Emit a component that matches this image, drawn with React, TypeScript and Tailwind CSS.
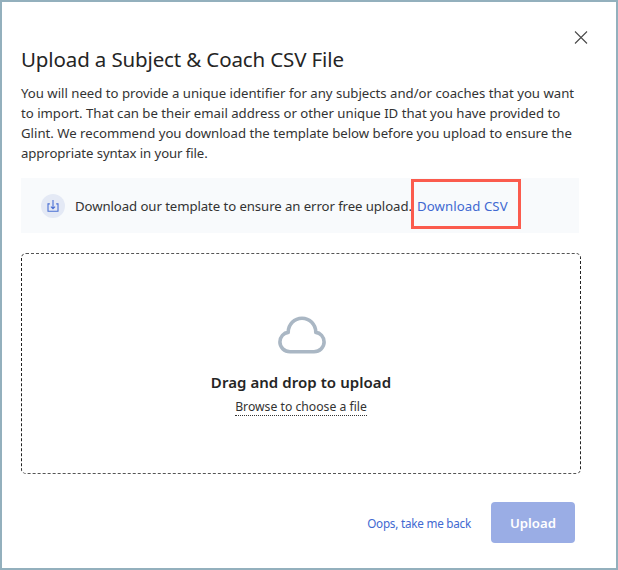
function CloseIcon() {
  return (
    <svg width="14" height="14" viewBox="0 0 14 14" fill="none" stroke="#4a4a4a" strokeWidth="1.1">
      <path d="M1 .5L13 12.5M13 .5L1 12.5" />
    </svg>
  );
}

function DownloadIcon() {
  return (
    <svg width="12" height="12" viewBox="0 0 12 12" fill="none" stroke="#4a70d4" strokeWidth="1.1">
      <path d="M2.8 3.9H1V11.2H11V3.9H9.2M6 0V8.6M3.9 6.6L6 8.7L8.1 6.6" />
    </svg>
  );
}

function CloudIcon() {
  return (
    <svg width="48" height="38" viewBox="0 0 48 38" fill="none" stroke="#aab7c4" strokeWidth="3.6" strokeLinejoin="round">
      <path d="M12 35.7C6.3 35.7 1.9 31.4 1.9 26.1C1.9 20.6 5.8 16.8 10.2 16.4C10.2 8.4 16.4 2.3 24 2.3C31.6 2.3 37.8 8.4 37.8 16.4C42.2 16.8 46.1 20.6 46.1 26.1C46.1 31.4 41.7 35.7 36 35.7Z" />
    </svg>
  );
}

export default function App() {
  return (
    <div className="flex h-[570px] w-[618px] flex-col overflow-hidden border-2 border-[#93b0bd] bg-white pl-[19px] font-['Noto_Sans',sans-serif] text-[#333333]">
      <header className="flex h-[43px] items-end justify-end pr-7">
        <button aria-label="Close"><CloseIcon /></button>
      </header>
      <h1 className="whitespace-nowrap text-[20.5px] leading-7 tracking-[-0.13px] text-[#252525]">
        Upload a Subject &amp; Coach CSV File
      </h1>
      <div className="mt-[10px] whitespace-nowrap text-[13.2px] leading-5 tracking-[-0.01px]">
        <p>You will need to provide a unique identifier for any subjects and/or coaches that you want</p>
        <p>to import. That can be their email address or other unique ID that you have provided to</p>
        <p>Glint. We recommend you download the template below before you upload to ensure the</p>
        <p className="tracking-[-0.09px]">appropriate syntax in your file.</p>
      </div>
      <section className="mt-[15px] flex h-[55px] w-[558px] shrink-0 items-center bg-[#f8fafc] pl-5 text-[13.2px]">
        <span className="flex size-6 items-center justify-center rounded-full bg-[#e4e9f5]"><DownloadIcon /></span>
        <span className="ml-[10px] w-[336px] whitespace-nowrap pt-[2px] tracking-[-0.08px]">Download our template to ensure an error free upload.</span>
        <a className="relative whitespace-nowrap pl-[6px] pt-[2px] tracking-[0.08px] text-[#4169d1]">
          Download CSV
          <span className="absolute -top-[15.5px] left-0 h-[50px] w-[110px] border-3 border-[#fb5b4d]" />
        </a>
      </section>
      <section className="mt-5 flex h-[221px] w-[560px] shrink-0 flex-col items-center rounded-[5px] border border-dashed border-x-[#222222] border-y-[#555555] pt-[62px]">
        <div className="pl-px"><CloudIcon /></div>
        <h2 className="mt-4 whitespace-nowrap text-[15px] font-semibold leading-6 tracking-[0.06px] text-[#252525]">Drag and drop to upload</h2>
        <a className="mt-[3px] h-[19px] whitespace-nowrap border-b border-dotted border-[#333333] text-[12.2px] leading-5">Browse to choose a file</a>
      </section>
      <footer className="mt-7 flex items-center justify-end pr-[41px]">
        <a className="whitespace-nowrap pt-[2px] text-[11.7px] tracking-[-0.23px] text-[#4169d1]">Oops, take me back</a>
        <button className="ml-5 h-[41px] w-[84px] rounded-[4px] bg-[#9aade5] pt-[2px] text-[13.2px] font-semibold text-white">Upload</button>
      </footer>
    </div>
  );
}
